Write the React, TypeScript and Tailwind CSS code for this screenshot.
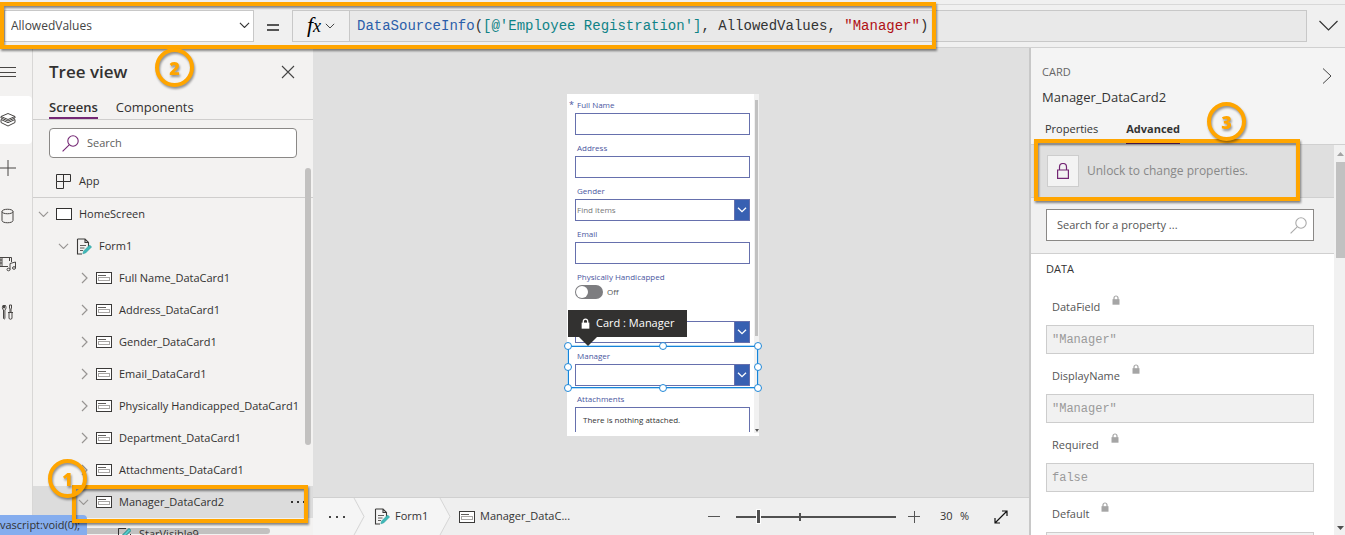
import { useState } from 'react';
import clsx from 'clsx';

const cards = [
  'Full Name_DataCard1',
  'Address_DataCard1',
  'Gender_DataCard1',
  'Email_DataCard1',
  'Physically Handicapped_DataCard1',
  'Department_DataCard1',
  'Attachments_DataCard1',
];

const properties = [
  { name: 'DataField', value: '"Manager"' },
  { name: 'DisplayName', value: '"Manager"' },
  { name: 'Required', value: 'false' },
  { name: 'Default', value: 'ThisItem.Manager' },
];

type IconProps = { className?: string };

function Chevron({ className, dir = 'down' }: IconProps & { dir?: 'down' | 'right' }) {
  return dir === 'down' ? (
    <svg viewBox="0 0 12 7" fill="none" stroke="currentColor" strokeWidth="1.2" className={className}>
      <path d="M1 1l5 5 5-5" />
    </svg>
  ) : (
    <svg viewBox="0 0 7 12" fill="none" stroke="currentColor" strokeWidth="1.2" className={className}>
      <path d="M1 1l5 5-5 5" />
    </svg>
  );
}

function SearchIcon({ className }: IconProps) {
  return (
    <svg viewBox="0 0 17 17" fill="none" stroke="currentColor" strokeWidth="1.1" className={className}>
      <circle cx="11" cy="6" r="5.2" />
      <path d="M7.2 9.8L.6 16.4" />
    </svg>
  );
}

function CardIcon() {
  return (
    <svg viewBox="0 0 16 12" className="h-3 w-4 shrink-0" fill="none">
      <rect x=".5" y=".5" width="15" height="11" fill="#fff" stroke="#3b3a39" />
      <path d="M2 3.5h8" stroke="#605e5c" />
      <rect x="2.5" y="5.5" width="11" height="3" stroke="#a8a6a4" />
    </svg>
  );
}

function FormIcon() {
  return (
    <svg viewBox="0 0 16 17" className="h-[17px] w-4 shrink-0" fill="none">
      <path d="M1.5 1h7.5l3.5 3.5V9M1.5 1v15H6M9 1v3.5h3.5" stroke="#3b3a39" strokeWidth="1.1" />
      <path d="M4 7.5h6M4 10h4.5M4 12.5h3" stroke="#605e5c" />
      <path d="M6.8 15.8l.8-2.8 6-6 2 2-6 6z" fill="#3fb8b8" stroke="#2a9d9d" strokeWidth=".5" />
    </svg>
  );
}

function SolidLock({ className }: IconProps) {
  return (
    <svg viewBox="0 0 8 10" className={className}>
      <path d="M2 5V3a2 2 0 0 1 4 0v2" fill="none" stroke="currentColor" strokeWidth="1.2" />
      <rect x=".5" y="4.2" width="7" height="5.5" fill="currentColor" />
    </svg>
  );
}

function Callout({ n, className }: { n: number; className: string }) {
  return (
    <span
      className={clsx(
        'absolute z-30 flex size-[39px] items-center justify-center rounded-full border-4 border-[#ffa500] text-lg leading-none font-extrabold text-[#ffa500] drop-shadow-[1px_2px_1px_rgba(0,0,0,0.4)]',
        className,
      )}
    >
      {n}
    </span>
  );
}

function Highlight({ className }: { className: string }) {
  return (
    <div
      className={clsx(
        'pointer-events-none absolute z-20 border-4 border-[#ffa500] drop-shadow-[1px_2px_1px_rgba(0,0,0,0.45)]',
        className,
      )}
    />
  );
}

function FormulaBar() {
  return (
    <header className="relative z-10 flex h-12 shrink-0 items-center border-b border-[#d0d0d0] bg-[#f0f0f0] pt-1">
      <div className="absolute inset-x-0 top-1 border-t border-[#d8d8d8]" />
      <div className="relative ml-1 w-[250px]">
        <select
          aria-label="Property"
          className="block h-8 w-full appearance-none border border-[#c8c8c8] bg-white pl-[6px] text-xs text-[#444]"
        >
          <option>AllowedValues</option>
        </select>
        <Chevron className="pointer-events-none absolute top-3 right-1 w-[11px] text-[#333]" />
      </div>
      <svg viewBox="0 0 12 8" className="mx-[13px] mt-1 h-2 w-3" stroke="#222" strokeWidth="1.6">
        <path d="M0 1h12M0 6h12" />
      </svg>
      <div className="flex h-8 min-w-0 flex-1 border border-[#c8c8c8] bg-[#e9e9e9]">
        <button
          type="button"
          aria-label="Functions"
          className="flex w-[57px] shrink-0 items-center justify-center gap-1 border-r border-[#c8c8c8] bg-[#f0f0f0]"
        >
          <span className="font-['Liberation_Serif',serif] text-[22px] leading-6 italic text-black">
            f<span className="text-lg">x</span>
          </span>
          <Chevron className="w-[10px] text-[#444]" />
        </button>
        <code className="pl-[7px] font-['Liberation_Mono',monospace] text-sm leading-[30px] whitespace-pre text-[#333]">
          <span className="text-[#2b5eaa]">DataSourceInfo</span>(
          <span className="text-[#0f8387]">[@'Employee Registration']</span>, AllowedValues,{' '}
          <span className="text-[#b01015]">"Manager"</span>)
        </code>
      </div>
      <button type="button" aria-label="Expand formula bar" className="pr-[7px] pl-3">
        <svg viewBox="0 0 19 11" className="h-[11px] w-[19px]" fill="none" stroke="#333" strokeWidth="1.2">
          <path d="M.5 1l9 9 9-9" />
        </svg>
      </button>
      <Highlight className="top-[2px] left-0 h-[47px] w-[936px]" />
      <Callout n={2} className="top-[48px] left-[155px]" />
    </header>
  );
}

const rail = [
  { label: 'Menu', path: 'M0 3.5h16M0 8.5h16M0 12.5h16' },
  {
    label: 'Tree view',
    path: 'M8 1.5l7 3-7 3-7-3zM1 7.500l7 3.200 7-3.200M1 10.500l7 3.500 7-3.500M1 4.500v1.500l7 3 7-3V4.500M1 7.500v3M15 7.500v3',
  },
  { label: 'Insert', path: 'M8 0v16M0 8h16' },
  { label: 'Data', path: 'M2 3.5c0-3 11-3 11 0v9c0 3-11 3-11 0zM2 3.5c0 3 11 3 11 0' },
  {
    label: 'Media',
    path: 'M8 10.5H0v-9h11.5V6M2 1.5v9M9.5 1.5V5M0 4h2M0 7h2M10 13.5V7.5l5.500-1.500v6M10 13.500a1.500 1.300 0 1 1-3 0 1.500 1.300 0 1 1 3 0M15.500 12a1.500 1.300 0 1 1-3 0 1.500 1.300 0 1 1 3 0',
  },
  {
    label: 'Advanced tools',
    path: 'M4.5 1v3h-1V1c-1.500 1-1.500 4 0 5v8.500q.7 1.200 1.400 0V6c1.500-1 1.500-4 0-5M9.500 1h2v3l-.5 1v3.500h-1V5l-.5-1zM8 8.500h5M9 9v5.500q1.500 1.500 3 0V9',
  },
];

function Rail() {
  return (
    <nav aria-label="Main" className="flex w-[33px] shrink-0 flex-col border-r border-[#d8d7d6]">
      {rail.map(({ label, path }) => (
        <button
          key={label}
          type="button"
          aria-label={label}
          className={clsx('flex h-12 items-center', label === 'Tree view' && 'rounded-r-sm bg-white')}
        >
          <svg viewBox="0 0 16 16" className="size-4" fill="none" stroke="#484644">
            <path d={path} />
          </svg>
        </button>
      ))}
    </nav>
  );
}

function TreeView() {
  return (
    <section className="relative flex w-[280px] shrink-0 flex-col text-[#323130]">
      <div className="flex h-12 shrink-0 items-center justify-between pr-[18px] pl-4">
        <h2 className="text-[17px] leading-6 font-semibold">Tree view</h2>
        <button type="button" aria-label="Close">
          <svg viewBox="0 0 14 14" className="size-[14px]" stroke="#444" strokeWidth="1.1">
            <path d="M1 1l12 12M13 1L1 13" />
          </svg>
        </button>
      </div>
      <div className="flex h-6 shrink-0 gap-[18px] border-b border-[#cfcecd] pl-4 text-[13px] leading-5">
        <button type="button" className="border-b-2 border-[#742774] font-semibold">
          Screens
        </button>
        <button type="button" className="border-b-2 border-transparent">
          Components
        </button>
      </div>
      <label className="mx-4 mt-2 flex h-[30px] shrink-0 items-center gap-2 rounded-sm border border-[#8a8886] bg-white pl-3">
        <SearchIcon className="size-[17px] text-[#742774]" />
        <input
          type="text"
          placeholder="Search"
          className="min-w-0 flex-1 text-[11px] outline-none placeholder:text-[#605e5c]"
        />
      </label>
      <div className="mt-2 flex h-8 shrink-0 items-center gap-2 border-b border-[#cfcecd] pl-[23px] text-[11px]">
        <svg viewBox="0 0 15 15" className="size-[15px]" fill="none" stroke="#323130">
          <path d="M.5.5h14v7H.5zM.5 7.5v7h7V.5" />
        </svg>
        App
      </div>
      <ul className="text-[11px]">
        <li className="flex h-8 items-center gap-[7px] pl-[5px]">
          <Chevron className="w-[11px] text-[#979593]" />
          <svg viewBox="0 0 16 12" className="h-3 w-4">
            <rect x=".5" y=".5" width="15" height="11" fill="#fff" stroke="#323130" />
          </svg>
          HomeScreen
        </li>
        <li className="flex h-8 items-center gap-[7px] pl-[25px]">
          <Chevron className="w-[11px] text-[#979593]" />
          <FormIcon />
          Form1
        </li>
        {cards.map(name => (
          <li key={name} className="flex h-8 items-center gap-[7px] pl-12 whitespace-nowrap">
            <Chevron dir="right" className="mr-px w-[7px] shrink-0 text-[#979593]" />
            <CardIcon />
            {name}
          </li>
        ))}
        <li className="relative flex h-8 items-center gap-[7px] bg-[#dcdcdc] pr-[8px] pl-[45px]">
          <Chevron className="w-[11px] text-[#979593]" />
          <CardIcon />
          <span className="flex-1">Manager_DataCard2</span>
          <svg viewBox="0 0 14 2" className="h-[2px] w-[14px]" fill="#323130">
            <path d="M0 0h2v2H0zM6 0h2v2H6zM12 0h2v2h-2z" />
          </svg>
          <Highlight className="-top-px left-[39px] h-[38px] w-[236px]" />
          <Callout n={1} className="-top-[27px] left-[15px]" />
        </li>
        <li className="relative z-10 flex h-8 items-center gap-2 pl-[85px]">
          <svg viewBox="0 0 13 13" className="size-[13px]" fill="none">
            <path d="M8 .5H.5v12h12V6" stroke="#323130" />
            <path d="M3.5 10l1-3L11 .5l2 2L6.5 9z" fill="#5cc" stroke="#1e7f7f" />
          </svg>
          StarVisible9
        </li>
      </ul>
      <div className="absolute top-[120px] right-[2px] h-[277px] w-[6px] rounded-full bg-[#c2c1c0]" />
      <div className="absolute bottom-px left-0 h-[6px] w-[237px] rounded-full bg-[#c2c1c0]" />
    </section>
  );
}

function FieldLabel({ children }: { children: string }) {
  return <span className="block h-[18px] pt-1 pl-[2px] text-[8px] leading-3 text-[#4a56a0]">{children}</span>;
}

type FieldProps = { label: string; kind?: 'select'; placeholder?: string; hideLabel?: boolean };

function Field({ label, kind, placeholder, hideLabel }: FieldProps) {
  const [value, setValue] = useState('');
  return (
    <label className="block h-[43px] pr-1 pl-2">
      <FieldLabel>{hideLabel ? '' : label}</FieldLabel>
      {kind === 'select' ? (
        <span className="relative block h-[22px]">
          <select
            aria-label={label}
            defaultValue=""
            className="block h-full w-full appearance-none border border-[#6670ad] bg-white pl-px text-[8px] text-[#777]"
          >
            <option value="">{placeholder}</option>
          </select>
          <span className="pointer-events-none absolute inset-y-0 right-0 flex w-4 items-center justify-center border border-[#6670ad] bg-[#3860b2] text-white">
            <svg viewBox="0 0 10 6" className="h-[6px] w-[10px] shrink-0" fill="none" stroke="currentColor" strokeWidth="1.3">
              <path d="M1 .7l4 4 4-4" />
            </svg>
          </span>
        </span>
      ) : (
        <input
          type="text"
          value={value}
          onChange={e => setValue(e.target.value)}
          className="block h-[22px] w-full border border-[#6670ad] bg-white px-1 text-[8px]"
        />
      )}
    </label>
  );
}

const handles = [
  'left-0 top-0',
  'left-1/2 top-0',
  'left-full top-0',
  'left-0 top-1/2',
  'left-full top-1/2',
  'left-0 top-full',
  'left-1/2 top-full',
  'left-full top-full',
];

function Phone() {
  return (
    <div className="mt-[46px] mr-4 flex h-[342px] w-48 bg-white pb-[3px]">
      <div className="w-[187px] pt-px">
        <div className="relative">
          <span className="absolute top-1 left-[2px] text-[9px] leading-3 text-[#4a56a0]">*</span>
          <Field label="Full Name" />
        </div>
        <Field label="Address" />
        <Field label="Gender" kind="select" placeholder="Find items" />
        <Field label="Email" />
        <div className="h-9 pl-2">
          <FieldLabel>Physically Handicapped</FieldLabel>
          <label className="flex h-[14px] items-center gap-1 text-[8px] text-[#555]">
            <input
              type="checkbox"
              role="switch"
              className="h-[14px] w-7 appearance-none rounded-full bg-[#7d7d80] before:block before:size-3 before:translate-x-px before:translate-y-px before:rounded-full before:bg-white"
            />
            Off
          </label>
        </div>
        <Field label="Department" kind="select" hideLabel />
        <div className="relative">
          <Field label="Manager" kind="select" />
          <div className="pointer-events-none absolute top-0 left-px h-[42px] w-[190px]">
            <div className="h-full w-full border border-[#1683d8] shadow-[0_0_0_1px_#b5dcf5]" />
            {handles.map(pos => (
              <span
                key={pos}
                className={clsx(
                  'absolute size-2 -translate-x-1/2 -translate-y-1/2 rounded-full border border-[#2088d8] bg-white',
                  pos,
                )}
              />
            ))}
          </div>
          <div className="absolute -top-9 left-px flex h-[27px] items-center gap-[6px] bg-[#323130] px-[13px] text-[11px] whitespace-nowrap text-white">
            <SolidLock className="h-[11px] w-[9px]" />
            Card : Manager
            <svg viewBox="0 0 18 9" className="absolute top-full left-[11px] h-[9px] w-[18px]" fill="#323130">
              <path d="M0 0h18L9 9z" />
            </svg>
          </div>
        </div>
        <div className="h-[43px] overflow-hidden pr-1 pl-2">
          <FieldLabel>Attachments</FieldLabel>
          <p className="h-8 border border-[#6670ad] pt-[6px] pl-[7px] text-[8px] leading-3 text-[#333]">
            There is nothing attached.
          </p>
        </div>
      </div>
      <div className="flex flex-1 flex-col items-center justify-between bg-[#f1f1f1] pt-[6px] pb-px">
        <div className="h-[236px] w-[3px] bg-[#c1c1c1]" />
        <svg viewBox="0 0 4 3" className="h-[3px] w-1" fill="#555">
          <path d="M0 0h4L2 3z" />
        </svg>
      </div>
    </div>
  );
}

function CrumbEdge() {
  return (
    <svg viewBox="0 0 12 38" className="h-full w-3 shrink-0" preserveAspectRatio="none">
      <path d="M0 0h1l10 19L1 38H0z" fill="#f5f5f5" />
      <path d="M1 0l10 19L1 38" fill="none" stroke="#d5d5d5" />
    </svg>
  );
}

function StatusBar() {
  return (
    <footer className="flex h-[38px] w-full items-stretch border-t border-[#d0d0d0] bg-[#efefef] text-[11px] text-[#333]">
      <button type="button" aria-label="More" className="flex w-10 items-center justify-end bg-[#f5f5f5] pr-2">
        <svg viewBox="0 0 16 2" className="h-[2px] w-4" fill="#444">
          <path d="M0 0h2v2H0zM7 0h2v2H7zM14 0h2v2h-2z" />
        </svg>
      </button>
      <CrumbEdge />
      <button
        type="button"
        className="-ml-3 flex w-[86px] items-center gap-[5px] bg-[#f5f5f5] pl-[21px] [clip-path:polygon(2px_0,100%_0,100%_100%,2px_100%,12px_50%)]"
      >
        <FormIcon />
        Form1
      </button>
      <CrumbEdge />
      <button type="button" className="flex items-center gap-[5px] pl-2">
        <CardIcon />
        Manager_DataC...
      </button>
      <div className="ml-auto flex items-center pr-[21px]">
        <button type="button" aria-label="Zoom out">
          <svg viewBox="0 0 12 12" className="size-3" stroke="#555">
            <path d="M0 5.5h12" />
          </svg>
        </button>
        <div className="relative mr-3 ml-4 flex w-[160px] items-center">
          <input
            type="range"
            aria-label="Zoom"
            min={10}
            max={160}
            defaultValue={30}
            className="h-[13px] w-full appearance-none bg-[linear-gradient(#505050,#505050)] bg-[length:100%_2px] bg-center bg-no-repeat [&::-webkit-slider-thumb]:h-[13px] [&::-webkit-slider-thumb]:w-[3px] [&::-webkit-slider-thumb]:appearance-none [&::-webkit-slider-thumb]:bg-[#505050] [&::-webkit-slider-thumb]:outline [&::-webkit-slider-thumb]:outline-white"
          />
          <span className="absolute left-[63px] h-2 w-[2px] bg-[#505050]" />
        </div>
        <button type="button" aria-label="Zoom in">
          <svg viewBox="0 0 12 12" className="size-3" stroke="#555">
            <path d="M0 5.5h12M6.5 0v12" />
          </svg>
        </button>
        <span className="ml-5 w-5">30</span>
        <span className="w-[34px]">%</span>
        <button type="button" aria-label="Fit to window">
          <svg viewBox="0 0 14 14" className="size-[14px]" fill="none" stroke="#111" strokeWidth="1.2">
            <path d="M1 13L13 1M8 1h5v5M1 8v5h5" />
          </svg>
        </button>
      </div>
    </footer>
  );
}

function PropertyPanel() {
  const [tab, setTab] = useState('Advanced');
  return (
    <aside className="flex w-[316px] shrink-0 flex-col border-l-2 border-[#c8c8c8] bg-[#f4f4f4] text-[#333]">
      <div className="relative h-[97px] shrink-0 border-b border-[#d0d0d0] pt-4 pl-[11px]">
        <p className="text-[11px] leading-4 text-[#666]">CARD</p>
        <h2 className="pt-2 text-[13px] leading-[18px]">Manager_DataCard2</h2>
        <button type="button" aria-label="Collapse panel" className="absolute top-5 right-[13px]">
          <svg viewBox="0 0 10 16" className="h-4 w-[10px]" fill="none" stroke="#444">
            <path d="M1 .5L9 8l-8 7.5" />
          </svg>
        </button>
        <div className="mt-[13px] flex gap-7 pl-[3px] text-[11px] leading-5">
          {['Properties', 'Advanced'].map(t => (
            <button
              key={t}
              type="button"
              onClick={() => setTab(t)}
              className={clsx('h-[25px] border-b-2 pb-1', t === tab ? 'border-[#742774] font-bold' : 'border-transparent')}
            >
              {t}
            </button>
          ))}
        </div>
        <Callout n={3} className="top-[54px] left-[176px]" />
      </div>
      <div className="flex min-h-0 flex-1">
        <div className="flex min-w-0 flex-1 flex-col">
          <div className="relative flex h-[53px] shrink-0 items-center gap-2 border-b border-[#d0d0d0] bg-[#dfdfdf] pl-4 text-xs text-[#888]">
            <button
              type="button"
              aria-label="Unlock"
              className="flex size-8 items-center justify-center border border-[#cdcdcd] bg-[#f3f3f3]"
            >
              <svg viewBox="0 0 12 16" className="h-4 w-3" fill="none" stroke="#742774" strokeWidth="1.2">
                <path d="M.6 7h10.8v8.4H.6zM2.5 7V4a3.5 3.5 0 0 1 7 0v3" />
              </svg>
            </button>
            Unlock to change properties.
            <Highlight className="-top-[6px] left-[3px] h-[62px] w-[266px]" />
          </div>
          <div className="h-14 shrink-0 border-b border-[#d0d0d0] bg-[#f0f0f0] pt-[11px] pr-5 pl-[15px]">
            <label className="flex h-8 items-center border border-[#8a8886] bg-white pr-[6px] pl-[10px]">
              <input
                type="text"
                placeholder="Search for a property ..."
                className="min-w-0 flex-1 text-[11px] outline-none placeholder:text-[#555]"
              />
              <SearchIcon className="size-[17px] text-[#aaa]" />
            </label>
          </div>
          <div className="min-h-0 flex-1 overflow-hidden bg-white pr-5 pl-[15px]">
            <h3 className="pt-[7px] pb-2 text-[11px] leading-4">DATA</h3>
            {properties.map(({ name, value }) => (
              <label key={name} className="block h-[69px]">
                <span className="flex h-10 items-start gap-3 pt-[14px] pl-[6px] text-[11px] leading-4 text-[#555]">
                  {name}
                  <SolidLock className="-mt-1 h-[10px] w-2 text-[#a5a5a5]" />
                </span>
                <input
                  readOnly
                  value={value}
                  className="block h-[29px] w-full border border-[#cdcdcd] bg-[#f1f1f1] pl-[5px] font-['Liberation_Mono',monospace] text-xs text-[#9a9a9a]"
                />
              </label>
            ))}
          </div>
        </div>
        <div className="flex w-[11px] flex-col items-end justify-between bg-[#f1f1f1] pt-[7px] pb-[5px]">
          <svg viewBox="0 0 7 4" className="mr-px h-1 w-[7px]" fill="#a3a3a3">
            <path d="M0 4h7L3.5 0z" />
          </svg>
          <div className="mt-[6px] mb-auto h-24 w-[9px] bg-[#c1c1c1]" />
          <svg viewBox="0 0 7 4" className="mr-px h-1 w-[7px]" fill="#505050">
            <path d="M0 0h7L3.5 4z" />
          </svg>
        </div>
      </div>
    </aside>
  );
}

export default function App() {
  return (
    <div className="relative flex h-screen flex-col overflow-hidden bg-[#f3f2f1] font-['Open_Sans','Noto_Sans',sans-serif]">
      <FormulaBar />
      <div className="flex min-h-0 flex-1">
        <Rail />
        <TreeView />
        <main className="flex min-w-0 flex-1 flex-col items-center justify-between bg-[#e0e0e0]">
          <Phone />
          <StatusBar />
        </main>
        <PropertyPanel />
      </div>
      {/* Browser link status */}
      <div className="absolute bottom-0 left-0 z-10 h-5 w-[87px] rounded-tr-sm bg-[#85adee] text-[11px] leading-5 whitespace-nowrap text-[#333]">
        vascript:void(0);
      </div>
    </div>
  );
}
